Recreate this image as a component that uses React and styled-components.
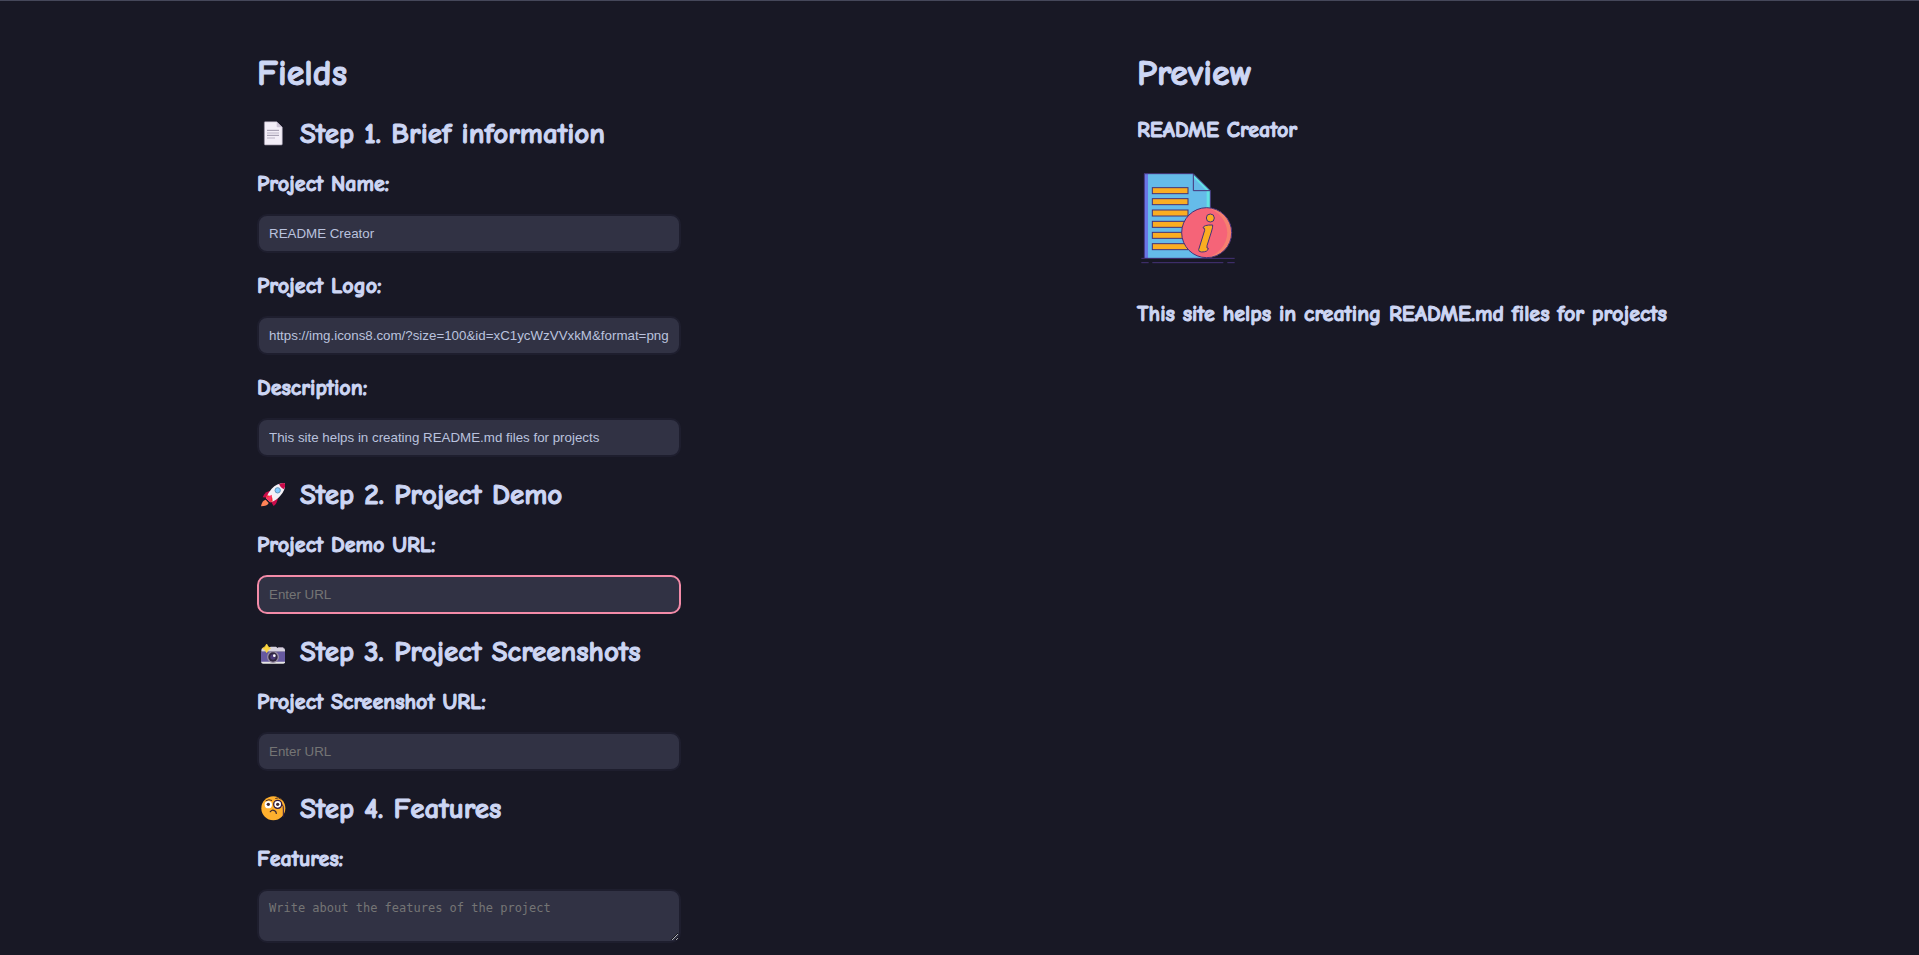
import React, { useState } from 'react';
import styled, { createGlobalStyle } from 'styled-components';

const GlobalStyle = createGlobalStyle`
  * { box-sizing: border-box; }
  body {
    margin: 0;
    background: #181825;
    color: #cdd6f4;
    font-family: "Comic Sans MS", "Comic Neue", Lato, sans-serif;
  }
`;

const Page = styled.main`
  display: flex;
  flex-wrap: wrap;
  justify-content: space-between;
  align-items: flex-start;
  gap: 48px;
  min-height: 100vh;
  padding: 51px 242px 12px 257px;
  border-top: 1px solid #45475a;

  @media (max-width: 1500px) {
    padding: 51px 48px 12px;
  }
`;

const FieldsColumn = styled.form`
  display: flex;
  flex-direction: column;
  gap: 20px;
  flex: 0 1 424px;
`;

const PreviewColumn = styled.section`
  display: flex;
  flex-direction: column;
  align-items: flex-start;
  gap: 20px;
  flex: 0 1 540px;
`;

const Title = styled.h1`
  margin: 0;
  font-size: 36px;
  line-height: 44px;
  font-weight: 700;
  -webkit-text-stroke: 1px;
`;

const Step = styled.section`
  display: flex;
  flex-direction: column;
  gap: 18px;
`;

const StepTitle = styled.h2`
  display: flex;
  align-items: center;
  gap: 13px;
  margin: 0;
  padding-left: 2px;
  font-size: 29px;
  line-height: 36px;
  font-weight: 700;
  -webkit-text-stroke: 1px;
`;

const StepIcon = styled.svg`
  flex: none;
  width: 28px;
  height: 28px;
`;

const FieldList = styled.div`
  display: flex;
  flex-direction: column;
  gap: 19px;
`;

const FieldGroup = styled.div`
  display: flex;
  flex-direction: column;
  gap: 16px;
`;

const Label = styled.label`
  font-size: 22px;
  line-height: 28px;
  font-weight: 700;
  -webkit-text-stroke: 1px;
`;

const TextInput = styled.input`
  display: block;
  width: 100%;
  padding: 10px;
  border: 2px solid #1e1e2e;
  border-radius: 10px;
  outline: none;
  background: #313244;
  color: #bac2de;
  font-family: "Liberation Sans", Arial, sans-serif;
  line-height: 15px;

  &::placeholder { color: #757575; }
  &:focus { border-color: #f38ba8; }
`;

const TextArea = styled(TextInput).attrs({ as: 'textarea' })`
  resize: both;
  font-family: "DejaVu Sans Mono", Consolas, monospace;
  font-size: 12px;
`;

const PreviewText = styled.p`
  margin: 0;
  font-size: 22px;
  line-height: 28px;
  font-weight: 700;
  -webkit-text-stroke: 1px;
`;

const Logo = styled.svg`
  width: 100px;
  height: 100px;
  margin: 8px 0;
`;

function PageIcon() {
  return (
    <StepIcon viewBox="27 30 84 84" aria-hidden="true">
      <path d="M45 35H80L97 52V102Q97 105 94 105H46Q43 105 43 102V38Q43 35 45 35Z" fill="#f3eef8" stroke="#8d8599" strokeWidth="2" />
      <path d="M80 35L97 52H83Q80 52 80 49Z" fill="#cdc4d6" />
      <path d="M51 61H87M51 76H87" stroke="#9b93a8" strokeWidth="3" />
      <path d="M51 69H87M51 84H75" stroke="#bbb4c6" strokeWidth="3" />
    </StepIcon>
  );
}

function RocketIcon() {
  return (
    <StepIcon viewBox="27 18 84 84" aria-hidden="true">
      <path d="M47 74Q36 76 33 94Q52 94 56 84Z" fill="#ff8357" />
      <path d="M61 48Q46 48 38 67L56 68Z" fill="#ca0b4a" />
      <path d="M84 68Q82 84 71 93L60 76Z" fill="#ca0b4a" />
      <path d="M103 24Q80 25 65 41Q53 54 48 70L61 82Q80 76 91 62Q107 44 105 26Z" fill="#f4f1f7" />
      <path d="M103 24Q95 24 87 28Q91 38 101 43Q107 34 105 26Z" fill="#ca0b4a" />
      <path d="M48 70L61 82L68 79Q68 67 64 62Q56 63 51 61Z" fill="#f8312f" />
      <path d="M48 70L66 59L61 82Z" fill="#ff3268" />
      <circle cx="83" cy="46" r="8" fill="#83cbff" stroke="#6694b8" strokeWidth="3" />
    </StepIcon>
  );
}

function CameraIcon() {
  return (
    <StepIcon viewBox="27 9 84 84" aria-hidden="true">
      <path d="M34 45Q34 39 40 39H56L62 35H78L83 39H99Q105 39 105 45V50H34Z" fill="#d7d2df" />
      <path d="M83 39L85 36H99L101 39Z" fill="#998ea4" />
      <path d="M33 50H105V81H33Z" fill="#6659a0" />
      <path d="M34 80H105V82Q105 86 100 86H39Q34 86 34 82Z" fill="#e6e6e6" />
      <circle cx="69" cy="66" r="18" fill="#998ea4" />
      <circle cx="69" cy="66" r="14" fill="#302640" />
      <circle cx="69" cy="66" r="8" fill="#4b3b78" />
      <circle cx="73" cy="62" r="4" fill="#fff" />
      <path d="M50 27Q53 36 62 40Q53 44 50 53Q47 44 37 40Q47 36 50 27Z" fill="#fcd53f" stroke="#fcd53f" strokeWidth="2" />
    </StepIcon>
  );
}

function MonocleIcon() {
  return (
    <StepIcon viewBox="27 15 84 84" aria-hidden="true">
      <circle cx="70" cy="55" r="36" fill="#ffb02e" />
      <circle cx="55" cy="44" r="11" fill="#fff" />
      <circle cx="55" cy="43" r="5" fill="#402a32" />
      <circle cx="83" cy="43" r="12" fill="#fff" stroke="#321b41" strokeWidth="4" />
      <circle cx="83" cy="43" r="5" fill="#402a32" />
      <path d="M96 43Q101 46 100 60V81" fill="none" stroke="#321b41" strokeWidth="3" />
      <path d="M48 32Q56 26 65 31M77 25Q86 20 93 27" fill="none" stroke="#4a2c20" strokeWidth="3" strokeLinecap="round" />
      <path d="M61 65Q67 58 73 62Q78 63 79 70" fill="none" stroke="#402a32" strokeWidth="4" strokeLinecap="round" />
    </StepIcon>
  );
}

function ProjectLogo() {
  return (
    <Logo viewBox="21 36 300 300" role="img" aria-label="Project logo">
      <path d="M43 41H189L241 92V294H43Z" fill="#65bbe9" />
      <path d="M43 41H54V294H43Z" fill="#6876e5" />
      <path d="M230 92H241V150H230Z" fill="#62e3e5" />
      <path d="M190 42V92H241Z" fill="#65bbe9" />
      <path d="M190 41L241 92H230L190 52Z" fill="#62e3e5" />
      <path d="M43 294V41H189L241 92V150M190 42V92H241" fill="none" stroke="#453277" strokeWidth="3" />
      <g fill="#faad22" stroke="#453277" strokeWidth="3">
        {[83, 116, 150, 184, 217, 251].map((y) => (
          <rect key={y} x="67" y={y} width="107" height="18" />
        ))}
      </g>
      <circle cx="230" cy="218" r="75" fill="#f56478" />
      <path d="M230 143A75 75 0 0 1 230 293A80 80 0 0 0 292 218A80 80 0 0 0 230 143Z" fill="#f6806f" />
      <circle cx="230" cy="218" r="75" fill="none" stroke="#453277" strokeWidth="3" />
      <circle cx="241" cy="174" r="12" fill="#faad22" stroke="#453277" strokeWidth="3" />
      <path d="M219 204Q220 194 248 195Q249 201 244 216L231 257Q229 267 235 265Q234 276 215 276Q205 276 206 269L224 211Q226 203 219 204Z" fill="#faad22" stroke="#453277" strokeWidth="3" strokeLinejoin="round" />
      <path d="M34 295H314M34 308H56M67 308H280M292 308H314" stroke="#453277" strokeWidth="3" />
    </Logo>
  );
}

function Field({ id, label, multiline, ...rest }) {
  return (
    <FieldGroup>
      <Label htmlFor={id}>{label}</Label>
      {multiline ? <TextArea id={id} rows={2} {...rest} /> : <TextInput id={id} type="text" {...rest} />}
    </FieldGroup>
  );
}

export default function App() {
  const [name, setName] = useState('README Creator');
  const [logo, setLogo] = useState('https://img.icons8.com/?size=100&id=xC1ycWzVVxkM&format=png');
  const [description, setDescription] = useState('This site helps in creating README.md files for projects');

  return (
    <>
      <GlobalStyle />
      <Page>
        <FieldsColumn>
          <Title>Fields</Title>
          <Step>
            <StepTitle><PageIcon />Step 1. Brief information</StepTitle>
            <FieldList>
              <Field id="name" label="Project Name:" value={name} onChange={(e) => setName(e.target.value)} />
              <Field id="logo" label="Project Logo:" value={logo} onChange={(e) => setLogo(e.target.value)} />
              <Field id="description" label="Description:" value={description} onChange={(e) => setDescription(e.target.value)} />
            </FieldList>
          </Step>
          <Step>
            <StepTitle><RocketIcon />Step 2. Project Demo</StepTitle>
            <Field id="demo" label="Project Demo URL:" placeholder="Enter URL" autoFocus />
          </Step>
          <Step>
            <StepTitle><CameraIcon />Step 3. Project Screenshots</StepTitle>
            <Field id="screenshot" label="Project Screenshot URL:" placeholder="Enter URL" />
          </Step>
          <Step>
            <StepTitle><MonocleIcon />Step 4. Features</StepTitle>
            <Field id="features" label="Features:" placeholder="Write about the features of the project" multiline />
          </Step>
        </FieldsColumn>
        <PreviewColumn>
          <Title>Preview</Title>
          <PreviewText>{name}</PreviewText>
          <ProjectLogo />
          <PreviewText>{description}</PreviewText>
        </PreviewColumn>
      </Page>
    </>
  );
}
